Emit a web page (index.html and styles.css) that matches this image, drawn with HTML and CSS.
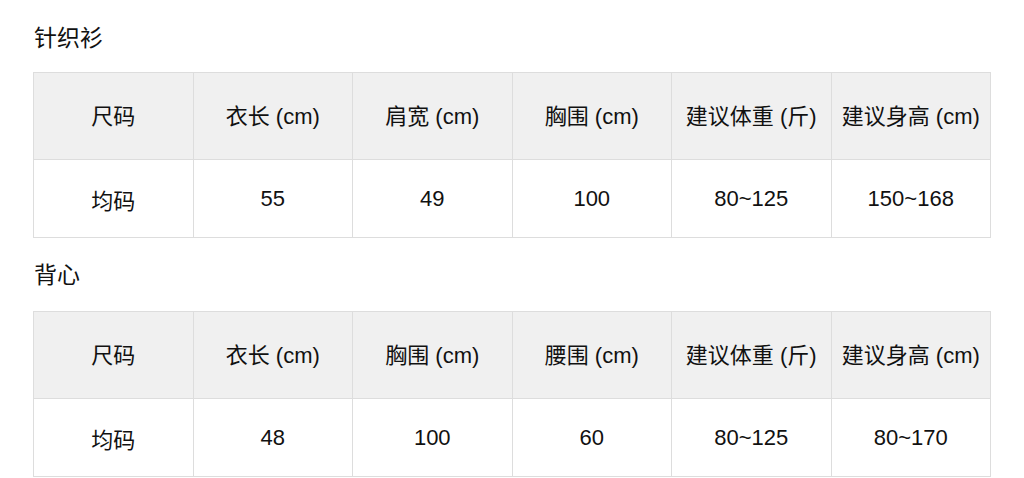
FILE: index.html
```html
<!DOCTYPE html>
<html lang="zh-CN">
<head>
<meta charset="utf-8">
<link rel="stylesheet" href="styles.css">
</head>
<body>
<div class="page">
  <h2 class="title">针织衫</h2>
  <table class="size-table">
    <tr class="head">
      <td>尺码</td><td>衣长 (cm)</td><td>肩宽 (cm)</td><td>胸围 (cm)</td><td>建议体重 (斤)</td><td>建议身高 (cm)</td>
    </tr>
    <tr class="body-row">
      <td>均码</td><td>55</td><td>49</td><td>100</td><td>80~125</td><td>150~168</td>
    </tr>
  </table>
  <h2 class="title second">背心</h2>
  <table class="size-table">
    <tr class="head">
      <td>尺码</td><td>衣长 (cm)</td><td>胸围 (cm)</td><td>腰围 (cm)</td><td>建议体重 (斤)</td><td>建议身高 (cm)</td>
    </tr>
    <tr class="body-row">
      <td>均码</td><td>48</td><td>100</td><td>60</td><td>80~125</td><td>80~170</td>
    </tr>
  </table>
</div>
</body>
</html>
```

FILE: styles.css
```css
html, body {
  margin: 0;
  padding: 0;
  background: #ffffff;
}
body {
  font-family: "Liberation Sans", "Noto Sans CJK SC", sans-serif;
  color: #111111;
}
.page {
  padding: 26px 34px 0 33px;
}
.title {
  margin: 0 0 22px 1px;
  font-size: 23px;
  line-height: 24px;
  font-weight: 400;
}
.title.second {
  margin-top: 25px;
  margin-bottom: 24px;
}
.size-table {
  width: 958px;
  border-collapse: collapse;
  table-layout: fixed;
}
.size-table td {
  border: 1px solid #dddddd;
  text-align: center;
  font-size: 22px;
  padding: 0;
}
.head td {
  background: #f0f0f0;
  height: 82px;
  padding-bottom: 4px;
}
.body-row td {
  height: 77px;
}
```
